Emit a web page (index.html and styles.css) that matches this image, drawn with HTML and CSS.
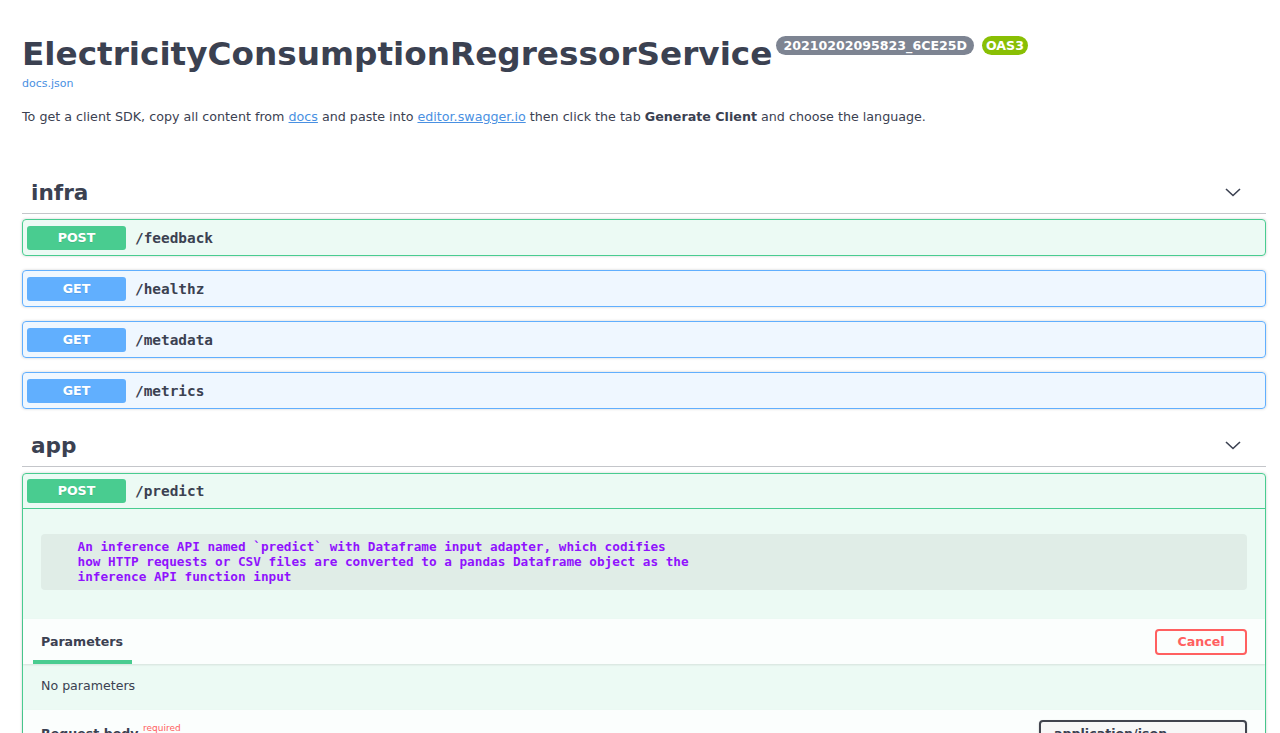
FILE: index.html
```html
<!DOCTYPE html>
<html lang="en">
<head>
<meta charset="utf-8">
<title>ElectricityConsumptionRegressorService</title>
<link rel="stylesheet" href="styles.css">
</head>
<body>
<div class="wrapper">
  <section class="info">
    <div class="title-row">
      <h2 class="title">ElectricityConsumptionRegressorService</h2>
      <span class="version">20210202095823_6CE25D</span>
      <span class="oas">OAS3</span>
    </div>
    <a class="url" href="#">docs.json</a>
    <p class="desc">To get a client SDK, copy all content from <a href="#">docs</a> and paste into <a href="#">editor.swagger.io</a> then click the tab <b>Generate Client</b> and choose the language.</p>
  </section>

  <section class="tag-section">
    <h3 class="tag"><span>infra</span>
      <svg class="arrow" width="20" height="20" viewBox="0 0 20 20"><path d="M3 7 L10 13.5 L17 7" fill="none" stroke="#3b4151" stroke-width="1.6"/></svg>
    </h3>
    <div class="opblock post"><div class="summary"><span class="method">POST</span><span class="path">/feedback</span></div></div>
    <div class="opblock get"><div class="summary"><span class="method">GET</span><span class="path">/healthz</span></div></div>
    <div class="opblock get"><div class="summary"><span class="method">GET</span><span class="path">/metadata</span></div></div>
    <div class="opblock get"><div class="summary"><span class="method">GET</span><span class="path">/metrics</span></div></div>
  </section>

  <section class="tag-section">
    <h3 class="tag"><span>app</span>
      <svg class="arrow" width="20" height="20" viewBox="0 0 20 20"><path d="M3 7 L10 13.5 L17 7" fill="none" stroke="#3b4151" stroke-width="1.6"/></svg>
    </h3>
    <div class="opblock post open">
      <div class="summary open-summary"><span class="method">POST</span><span class="path">/predict</span></div>
      <div class="body">
        <div class="description"><pre class="code">    An inference API named `predict` with Dataframe input adapter, which codifies
    how HTTP requests or CSV files are converted to a pandas Dataframe object as the
    inference API function input</pre></div>
        <div class="section-header">
          <div class="tab">Parameters</div>
          <button class="cancel">Cancel</button>
        </div>
        <div class="params">No parameters</div>
        <div class="section-header reqbody">
          <div class="rb-title">Request body <sup>required</sup></div>
          <div class="select">application/json
            <svg width="12" height="12" viewBox="0 0 20 20"><path d="M3 7 L10 13.5 L17 7" fill="none" stroke="#3b4151" stroke-width="2.4"/></svg>
          </div>
        </div>
      </div>
    </div>
  </section>
</div>
</body>
</html>
```
FILE: styles.css
```css
* { box-sizing: border-box; }
html, body { margin: 0; padding: 0; background: #fff; }
body {
  font-family: "DejaVu Sans", "Noto Sans", sans-serif;
  color: #3b4151;
}
.wrapper { padding: 0 14px 0 22px; }

.info { padding-top: 33px; }
.title-row { display: flex; align-items: flex-start; }
.title {
  margin: 0;
  font-size: 32.7px;
  line-height: 42px;
  font-weight: 700;
  color: #3b4151;
}
.version, .oas {
  display: inline-block;
  margin-top: 3px;
  font-size: 12.6px;
  font-weight: 700;
  color: #fff;
  border-radius: 51px;
  line-height: 19px;
  height: 19px;
  padding: 0 7px;
}
.version { background: #7d8492; margin-left: 4px; }
.oas { background: #89bf04; margin-left: 8px; padding: 0 4px; }
.url {
  display: block;
  font-size: 11px;
  line-height: 14px;
  color: #4990e2;
  text-decoration: none;
  margin-top: 2px;
}
.desc {
  margin: 18px 0 0;
  font-size: 12.7px;
  line-height: 16px;
}
.desc a { color: #4990e2; }
.desc b { font-weight: 700; }

.info + .tag-section { margin-top: 46px; }
.tag {
  display: flex;
  align-items: center;
  justify-content: space-between;
  margin: 0 0 5px;
  padding: 9px 23px 9px 9px;
  height: 43px;
  font-size: 21.6px;
  font-weight: 700;
  border-bottom: 1px solid rgba(59, 65, 81, .3);
}
.tag-section + .tag-section .tag { height: 44px; margin-bottom: 6px; padding-top: 10px; }
.arrow { display: block; }

.opblock {
  border: 1px solid;
  border-radius: 4px;
  margin-bottom: 14px;
  box-shadow: 0 0 3px rgba(0, 0, 0, .19);
}
.opblock.post { background: rgba(73, 204, 144, .1); border-color: #49cc90; }
.opblock.get { background: rgba(97, 175, 254, .1); border-color: #61affe; }
.summary {
  display: flex;
  align-items: center;
  padding: 5px 4px;
  height: 35px;
}
.method {
  display: inline-block;
  width: 99px;
  height: 24px;
  line-height: 24px;
  border-radius: 3px;
  text-align: center;
  color: #fff;
  font-size: 12.6px;
  font-weight: 700;
  text-shadow: 0 1px 0 rgba(0, 0, 0, .1);
}
.post .method { background: #49cc90; }
.get .method { background: #61affe; }
.path {
  padding: 0 9px;
  font-family: "DejaVu Sans Mono", monospace;
  font-size: 14.4px;
  font-weight: 700;
  color: #3b4151;
}
.open-summary { border-bottom: 1px solid #49cc90; }

.description { padding: 25px 18px 29px; }
.code {
  margin: 0;
  padding: 5px 6px 6px;
  border-radius: 4px;
  background: rgba(0, 0, 0, .05);
  font-family: "DejaVu Sans Mono", monospace;
  font-size: 12.7px;
  line-height: 15px;
  font-weight: 700;
  color: #9012fe;
  white-space: pre;
}

.section-header {
  display: flex;
  align-items: center;
  justify-content: space-between;
  min-height: 45px;
  padding: 0 18px 0 10px;
  background: rgba(255, 255, 255, .8);
  box-shadow: 0 1px 2px rgba(0, 0, 0, .1);
}
.tab {
  align-self: stretch;
  display: flex;
  align-items: center;
  width: 99px;
  padding: 4px 8px 0;
  font-size: 12.6px;
  font-weight: 700;
  border-bottom: 4px solid #49cc90;
}
.cancel {
  width: 92px;
  height: 26px;
  border: 2px solid #ff6060;
  border-radius: 4px;
  background: transparent;
  color: #ff6060;
  font-family: "DejaVu Sans", sans-serif;
  font-size: 12.6px;
  font-weight: 700;
  padding: 0;
}
.params {
  padding: 14px 18px 16px;
  font-size: 12.6px;
  line-height: 16px;
}
.reqbody { align-items: flex-start; padding: 10px 18px 0 18px; }
.rb-title { font-size: 12.6px; font-weight: 700; padding-top: 6px; }
.rb-title sup { color: #ff6060; font-size: 9px; font-weight: 400; position: relative; top: -3px; vertical-align: top; }
.select {
  width: 208px;
  height: 32px;
  border: 2px solid #41444e;
  border-radius: 4px;
  background: #f7f7f7;
  padding: 4px 13px 0;
  font-size: 12.6px;
  font-weight: 700;
  display: flex;
  justify-content: space-between;
  align-items: flex-start;
  box-shadow: 0 1px 2px rgba(0, 0, 0, .25);
}
.select svg { margin-top: 4px; }
```
